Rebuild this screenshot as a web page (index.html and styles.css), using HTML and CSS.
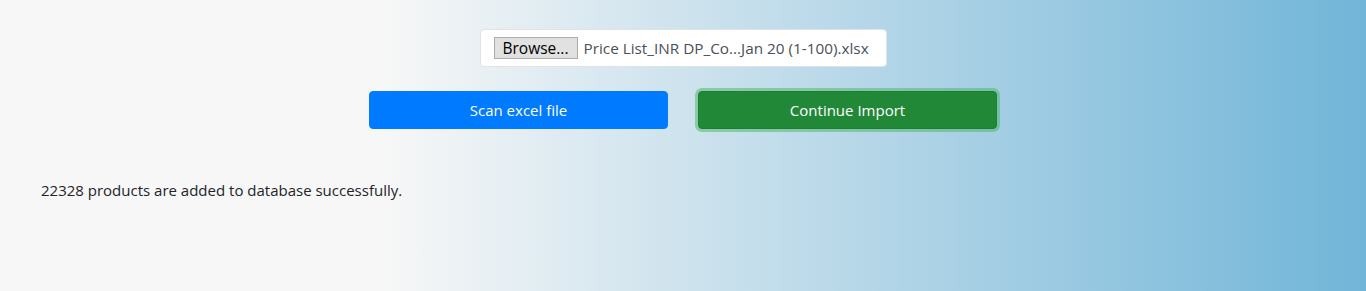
FILE: index.html
```html
<!DOCTYPE html>
<html lang="en">
<head>
  <meta charset="UTF-8">
  <title>Import Products</title>
  <meta name="viewport" content="width=device-width, initial-scale=1">
  <link rel="stylesheet" href="styles.css">
</head>
<body>

  <div class="import-panel">
    <div class="file-box">
      <span class="browse-btn">Browse...</span>
      <span class="file-name">Price List_INR DP_Co...Jan 20 (1-100).xlsx</span>
    </div>

    <div class="actions">
      <button class="btn btn-scan">Scan excel file</button>
      <button class="btn btn-continue">Continue Import</button>
    </div>
  </div>

  <p class="result">22328 products are added to database successfully.</p>

</body>
</html>
```

FILE: styles.css
```css
html, body {
  height: 100%;
}
body {
  margin: 0;
  font-family: "Open Sans", "Noto Sans", Arial, sans-serif;
  font-size: 15px;
  color: #212529;
  background: linear-gradient(to right, #f7f7f7 28%, #71b5d8 100%);
}
.import-panel {
  display: flex;
  flex-direction: column;
  align-items: center;
  padding-top: 29px;
}
.file-box {
  display: flex;
  align-items: center;
  gap: 6px;
  width: 407px;
  height: 38px;
  box-sizing: border-box;
  padding: 0 13px;
  background: #fff;
  border: 1px solid #dde3e8;
  border-radius: 4px;
}
.browse-btn {
  display: inline-flex;
  align-items: center;
  justify-content: center;
  width: 84px;
  height: 22px;
  box-sizing: border-box;
  background: #e1e1e1;
  border: 1px solid #adadad;
  color: #000;
  font-size: 15.5px;
}
.file-name {
  color: #495057;
  font-size: 15.3px;
  white-space: nowrap;
}
.actions {
  display: flex;
  gap: 30px;
  margin-top: 24px;
}
.btn {
  width: 299px;
  height: 38px;
  border: 1px solid transparent;
  border-radius: 4px;
  color: #fff;
  font-family: inherit;
  font-size: 15px;
  cursor: pointer;
}
.btn-scan {
  background-color: #007bff;
  border-color: #007bff;
}
.btn-continue {
  background-color: #218838;
  border-color: #1e7e34;
  box-shadow: 0 0 0 3px rgba(72, 180, 97, 0.5);
}
.result {
  margin: 0;
  padding: 51px 0 0 41px;
}
```
